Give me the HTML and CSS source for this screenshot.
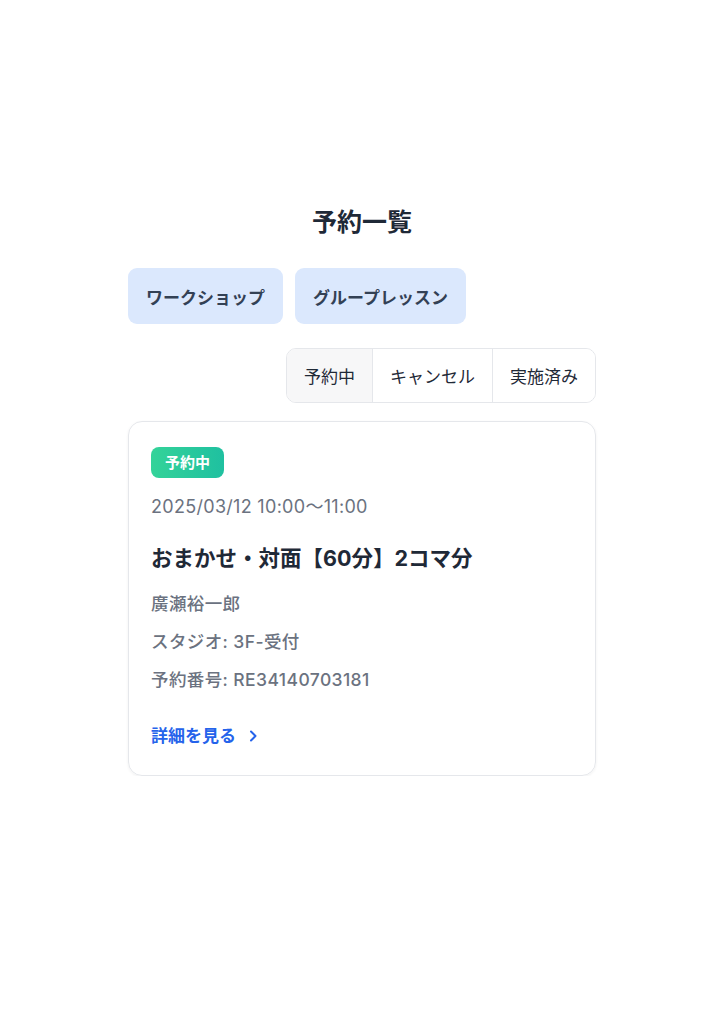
FILE: index.html
```html
<!DOCTYPE html>
<html lang="ja">
<head>
  <meta charset="UTF-8">
  <meta name="viewport" content="width=device-width, initial-scale=1.0">
  <title>予約一覧</title>
  <link rel="stylesheet" href="styles.css">
</head>
<body>

<main class="page">
  <h1 class="page-title">予約一覧</h1>

  <div class="category-tabs">
    <button class="category-btn">ワークショップ</button>
    <button class="category-btn">グループレッスン</button>
  </div>

  <div class="status-row">
    <div class="status-tabs">
      <button class="status-tab active">予約中</button>
      <button class="status-tab">キャンセル</button>
      <button class="status-tab">実施済み</button>
    </div>
  </div>

  <div class="reservation-card">
    <span class="badge">予約中</span>
    <p class="card-date">2025/03/12 10:00〜11:00</p>
    <h2 class="card-title">おまかせ・対面【60分】2コマ分</h2>
    <p class="card-info first">廣瀬裕一郎</p>
    <p class="card-info">スタジオ: 3F-受付</p>
    <p class="card-info">予約番号: RE34140703181</p>
    <a class="detail-link" href="#">詳細を見る
      <svg width="16" height="16" viewBox="0 0 16 16" fill="none" stroke="currentColor" stroke-width="2" stroke-linecap="round" stroke-linejoin="round"><path d="M6 3.5l4.5 4.5L6 12.5"/></svg>
    </a>
  </div>
</main>

</body>
</html>
```

FILE: styles.css
```css
:root {
  --text-color: #1f2937;
  --muted-color: #6b7280;
  --border-color: #e5e7eb;
  --tab-bg: #dbe8fd;
  --link-color: #2563eb;
}

body {
  margin: 0;
  font-family: "Inter", "Noto Sans CJK JP", sans-serif;
  color: var(--text-color);
  background-color: #fff;
}

.page {
  max-width: 468px;
  margin: 0 auto;
  padding-top: 204px;
}

.page-title {
  margin: 0 0 28px;
  font-size: 25px;
  line-height: 36px;
  font-weight: 700;
  text-align: center;
}

.category-tabs {
  display: flex;
  gap: 12px;
}

.category-btn {
  height: 56px;
  padding: 0 18px;
  border: none;
  border-radius: 9px;
  background-color: var(--tab-bg);
  color: #334155;
  font-family: inherit;
  font-size: 17px;
  font-weight: 700;
}

.status-row {
  display: flex;
  justify-content: flex-end;
  margin-top: 24px;
}

.status-tabs {
  display: flex;
  border: 1px solid var(--border-color);
  border-radius: 10px;
  overflow: hidden;
}

.status-tab {
  height: 53px;
  padding: 0 17px;
  border: none;
  border-left: 1px solid var(--border-color);
  background-color: #fff;
  color: var(--text-color);
  font-family: inherit;
  font-size: 17px;
  font-weight: 400;
}

.status-tab:first-child {
  border-left: none;
}

.status-tab.active {
  background-color: #f7f7f8;
}

.reservation-card {
  margin-top: 18px;
  padding: 25px 22px 27px;
  border: 1px solid var(--border-color);
  border-radius: 14px;
  box-shadow: 0 1px 3px rgba(0, 0, 0, 0.06);
}

.badge {
  display: inline-block;
  height: 31px;
  padding: 0 14px;
  border-radius: 8px;
  background: linear-gradient(90deg, #34d399, #1fc0a0);
  color: #fff;
  font-size: 15px;
  font-weight: 700;
  line-height: 31px;
}

.card-date {
  margin: 17px 0 0;
  font-size: 18px;
  line-height: 24px;
  letter-spacing: 0.3px;
  color: var(--muted-color);
}

.card-title {
  margin: 24px 0 0;
  font-size: 21.5px;
  line-height: 30px;
  font-weight: 700;
}

.card-info {
  margin: 14px 0 0;
  font-size: 17.5px;
  line-height: 24px;
  letter-spacing: 0.4px;
  color: var(--muted-color);
  font-weight: 500;
}

.card-info.first {
  margin-top: 19px;
}

.detail-link {
  display: inline-flex;
  align-items: center;
  gap: 9px;
  margin-top: 32px;
  color: var(--link-color);
  font-size: 17px;
  line-height: 24px;
  font-weight: 700;
  text-decoration: none;
}
```
